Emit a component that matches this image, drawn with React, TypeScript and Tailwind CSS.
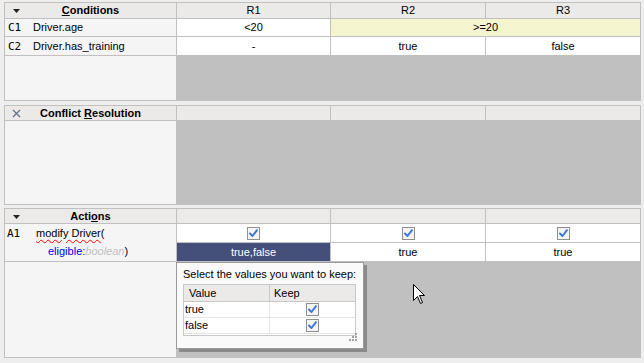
import React from "react";

function Check() {
  return (
    <svg width="13" height="13" viewBox="0 0 13 13">
      <rect x="0.5" y="0.5" width="12" height="12" fill="#f4f4f4" stroke="#8f8f8f" />
      <path d="M3 6.5 L5.5 9 L10 3.2" fill="none" stroke="#3d7ad6" strokeWidth="2" strokeLinecap="round" strokeLinejoin="round" />
    </svg>
  );
}

function Tri() {
  return (
    <svg width="7" height="4" viewBox="0 0 7 4" className="absolute left-[8px] top-[6px]">
      <path d="M0 0 H7 L3.5 4 Z" fill="#222" />
    </svg>
  );
}

function Cross() {
  return (
    <svg width="9" height="9" viewBox="0 0 9 9" className="absolute left-[7px] top-[3px]">
      <path d="M1 1 L8 8 M8 1 L1 8" stroke="#5f7186" strokeWidth="1.2" />
    </svg>
  );
}

function Cursor() {
  return (
    <svg width="13" height="21" viewBox="0 0 13 21" className="absolute left-[413px] top-[284px]">
      <path d="M0.5 0.5 V16.5 L4.5 12.5 L7.5 19.5 L9.5 18.5 L6.5 11.5 H11.5 Z" fill="#fff" stroke="#000" strokeWidth="1" strokeLinejoin="miter" />
    </svg>
  );
}

const head = "bg-[#ece9e9] flex items-center justify-center";
const left = "bg-[#f5f5f6]";
const cell = "bg-white flex items-center justify-center";

export default function App() {
  return (
    <div className="relative w-[644px] h-[363px] bg-[#efeeee] pl-[4px] pt-[2px] font-['Liberation_Sans',Arial,sans-serif] text-[11px] text-black leading-none">
      {/* Conditions */}
      <div className="w-[637px] grid grid-cols-[171px_153px_154px_154px] grid-rows-[15px_17px_18px_44px] gap-px bg-[#c0c0c0] border border-[#c0c0c0]">
        <div className={head + " relative font-bold"}>
          <Tri />
          <span><span className="underline">C</span>onditions</span>
        </div>
        <div className={head}>R1</div>
        <div className={head}>R2</div>
        <div className={head}>R3</div>

        <div className={left + " flex items-center"}>
          <span className="w-[28px] pl-[3px] font-['DejaVu_Sans_Mono',monospace] text-[11px]">C1</span>
          <span>Driver.age</span>
        </div>
        <div className={cell}>&lt;20</div>
        <div className="col-span-2 bg-[#f5f5d0] flex items-center justify-center">&gt;=20</div>

        <div className={left + " flex items-center"}>
          <span className="w-[28px] pl-[3px] font-['DejaVu_Sans_Mono',monospace] text-[11px]">C2</span>
          <span>Driver.has_training</span>
        </div>
        <div className={cell}>-</div>
        <div className={cell}>true</div>
        <div className={cell}>false</div>

        <div className={left}></div>
        <div className="col-span-3 bg-[#c0c0c0]"></div>
      </div>

      {/* Conflict Resolution */}
      <div className="mt-[4px] w-[637px] grid grid-cols-[171px_153px_154px_154px] grid-rows-[14px_83px] gap-px bg-[#c0c0c0] border border-[#c0c0c0]">
        <div className={head + " relative font-bold"}>
          <Cross />
          <span>Conflict <span className="underline">R</span>esolution</span>
        </div>
        <div className={head}></div>
        <div className={head}></div>
        <div className={head}></div>
        <div className={left}></div>
        <div className="col-span-3 bg-[#c0c0c0]"></div>
      </div>

      {/* Actions */}
      <div className="relative mt-[3px] w-[637px] grid grid-cols-[171px_153px_154px_154px] grid-rows-[14px_18px_18px_95px] gap-px bg-[#c0c0c0] border border-[#c0c0c0]">
        <div className={head + " relative font-bold"}>
          <Tri />
          <span>Acti<span className="underline">o</span>ns</span>
        </div>
        <div className={head}></div>
        <div className={head}></div>
        <div className={head}></div>

        <div className={left + " row-span-2 flex flex-col"}>
          <div className="h-[18px] flex items-center">
            <span className="w-[31px] pl-[2px] font-['DejaVu_Sans_Mono',monospace] text-[11px]">A1</span>
            <span className="underline decoration-wavy decoration-[#ff0000] decoration-1 underline-offset-2">modify Driver</span>
            <span>(</span>
          </div>
          <div className="h-[19px] flex items-center pl-[43px]">
            <span className="text-[#0000ee]">eligible:</span>
            <span className="text-[#c0c0c0] italic">boolean</span>
            <span>)</span>
          </div>
        </div>
        <div className={cell}><Check /></div>
        <div className={cell}><Check /></div>
        <div className={cell}><Check /></div>

        <div className="bg-[#45507a] text-white flex items-center justify-center">true,false</div>
        <div className={cell}>true</div>
        <div className={cell}>true</div>

        <div className={left}></div>
        <div className="col-span-3 bg-[#c0c0c0]"></div>

        {/* value picker popup */}
        <div className="absolute left-[171px] top-[53px] w-[188px] h-[87px] bg-[#fafafa] border border-[#9a9a9a] shadow-[3px_3px_0_#8a8a8a] px-[6px] pt-[6px]">
          <div className="h-[11px] flex items-center whitespace-nowrap">Select the values you want to keep:</div>
          <div className="relative mt-[4px] w-[173px] h-[52px] border border-[#c8c8c8] bg-white">
            <div className="flex h-[17px] bg-[#ece9e9] border-b border-[#c8c8c8]">
              <div className="w-[86px] border-r border-[#c8c8c8] flex items-center pl-[5px]">Value</div>
              <div className="flex-1 flex items-center pl-[4px]">Keep</div>
            </div>
            <div className="flex h-[16px] border-b border-[#e4e4e4]">
              <div className="w-[86px] border-r border-[#e4e4e4] flex items-center pl-[1px]">true</div>
              <div className="flex-1 flex items-center justify-center"><Check /></div>
            </div>
            <div className="flex h-[16px] border-b border-[#e4e4e4]">
              <div className="w-[86px] border-r border-[#e4e4e4] flex items-center pl-[1px]">false</div>
              <div className="flex-1 flex items-center justify-center"><Check /></div>
            </div>
            <svg width="8" height="8" viewBox="0 0 8 8" className="absolute right-[-2px] bottom-[-6px]">
              <rect x="6" y="0" width="2" height="2" fill="#a0a0a0" />
              <rect x="3" y="3" width="2" height="2" fill="#a0a0a0" />
              <rect x="6" y="3" width="2" height="2" fill="#a0a0a0" />
              <rect x="0" y="6" width="2" height="2" fill="#a0a0a0" />
              <rect x="3" y="6" width="2" height="2" fill="#a0a0a0" />
              <rect x="6" y="6" width="2" height="2" fill="#a0a0a0" />
            </svg>
          </div>
        </div>
      </div>

      <Cursor />
    </div>
  );
}
